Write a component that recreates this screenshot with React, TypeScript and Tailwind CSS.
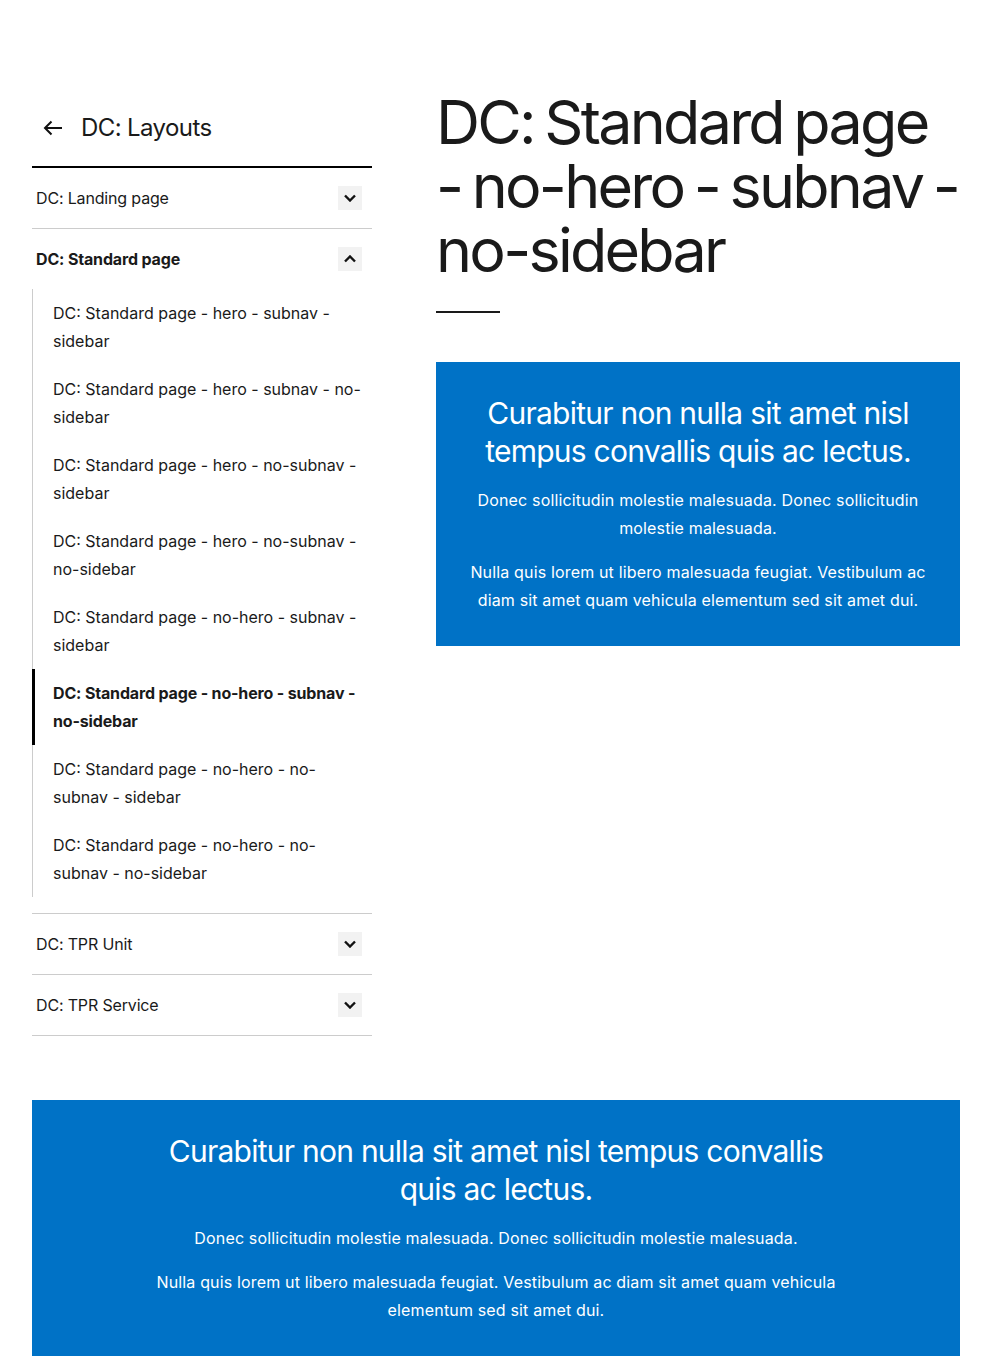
import React from 'react'

type Sub = { lines: string[]; active?: boolean }

const subItems: Sub[] = [
  { lines: ['DC: Standard page - hero - subnav -', 'sidebar'] },
  { lines: ['DC: Standard page - hero - subnav - no-', 'sidebar'] },
  { lines: ['DC: Standard page - hero - no-subnav -', 'sidebar'] },
  { lines: ['DC: Standard page - hero - no-subnav -', 'no-sidebar'] },
  { lines: ['DC: Standard page - no-hero - subnav -', 'sidebar'] },
  { lines: ['DC: Standard page - no-hero - subnav -', 'no-sidebar'], active: true },
  { lines: ['DC: Standard page - no-hero - no-', 'subnav - sidebar'] },
  { lines: ['DC: Standard page - no-hero - no-', 'subnav - no-sidebar'] },
]

const titleLines = ['DC: Standard page', '- no-hero - subnav -', 'no-sidebar']

function Chevron({ up }: { up?: boolean }) {
  return (
    <span className="flex h-6 w-6 items-center justify-center bg-[#f2f2f2]">
      <svg width="12" height="8" viewBox="0 0 12 8" fill="none" className={up ? 'rotate-180' : ''}>
        <polyline points="1,1.5 6,6.5 11,1.5" stroke="#111" strokeWidth="2.4" />
      </svg>
    </span>
  )
}

function Row({ label, bold, up, border = true }: { label: string; bold?: boolean; up?: boolean; border?: boolean }) {
  return (
    <div className={`flex h-[60px] items-center justify-between pl-1 pr-[10px] ${border ? 'box-content border-b border-[#cccccc]' : ''}`}>
      <span className={`text-base tracking-[-0.01em] ${bold ? 'font-bold' : ''}`}>{label}</span>
      <Chevron up={up} />
    </div>
  )
}

function Promo({ wide }: { wide?: boolean }) {
  return (
    <div className="bg-[#0072c6] p-8 text-center text-white">
      <div className={wide ? 'mx-auto max-w-[690px]' : ''}>
        <h2 className="text-[30px] leading-[38px] tracking-[-0.025em]">
          Curabitur non nulla sit amet nisl tempus convallis quis ac lectus.
        </h2>
        <p className="mt-4 text-base leading-7 tracking-[0.01em]">
          Donec sollicitudin molestie malesuada. Donec sollicitudin molestie malesuada.
        </p>
        <p className="mt-4 text-base leading-7 tracking-[0.01em]">
          Nulla quis lorem ut libero malesuada feugiat. Vestibulum ac diam sit amet quam vehicula elementum sed sit amet dui.
        </p>
      </div>
    </div>
  )
}

export default function App() {
  return (
    <div className="min-h-screen bg-white font-['Inter',sans-serif] text-[#1a1a1a]">
      <div className="px-8 pt-[90px]">
        <div className="flex gap-16">
          <nav className="w-[340px] shrink-0">
            <div className="flex items-center py-[22px]">
              <svg width="20" height="16" viewBox="0 0 20 16" fill="none" className="ml-[11px]">
                <path d="M19 8H2M8.5 1.5 2 8l6.5 6.5" stroke="#111" strokeWidth="2" />
              </svg>
              <span className="ml-[18px] text-2xl leading-8 tracking-[-0.025em]">DC: Layouts</span>
            </div>
            <div className="border-t-2 border-black">
              <Row label="DC: Landing page" />
              <div className="box-content border-b border-[#cccccc] pb-4">
                <Row label="DC: Standard page" bold up border={false} />
                <ul>
                  {subItems.map((s, i) => (
                    <li
                      key={i}
                      className={`py-[10px] text-base leading-7 ${
                        s.active ? 'border-l-[3px] border-black pl-[18px] font-bold tracking-[-0.01em]' : 'border-l border-[#cccccc] pl-5'
                      }`}
                    >
                      {s.lines.map((l, j) => (
                        <span key={j} className="block whitespace-nowrap">{l}</span>
                      ))}
                    </li>
                  ))}
                </ul>
              </div>
              <Row label="DC: TPR Unit" />
              <Row label="DC: TPR Service" />
            </div>
          </nav>
          <main className="min-w-0 flex-1">
            <h1 className="text-[61px] leading-[64px] tracking-[-0.045em] [word-spacing:-4px]">
              {titleLines.map(l => (
                <span key={l} className="block whitespace-nowrap">{l}</span>
              ))}
            </h1>
            <div className="mt-[29px] h-[2px] w-16 bg-[#1a1a1a]" />
            <div className="mt-[49px]">
              <Promo />
            </div>
          </main>
        </div>
        <div className="mt-16">
          <Promo wide />
        </div>
      </div>
    </div>
  )
}
